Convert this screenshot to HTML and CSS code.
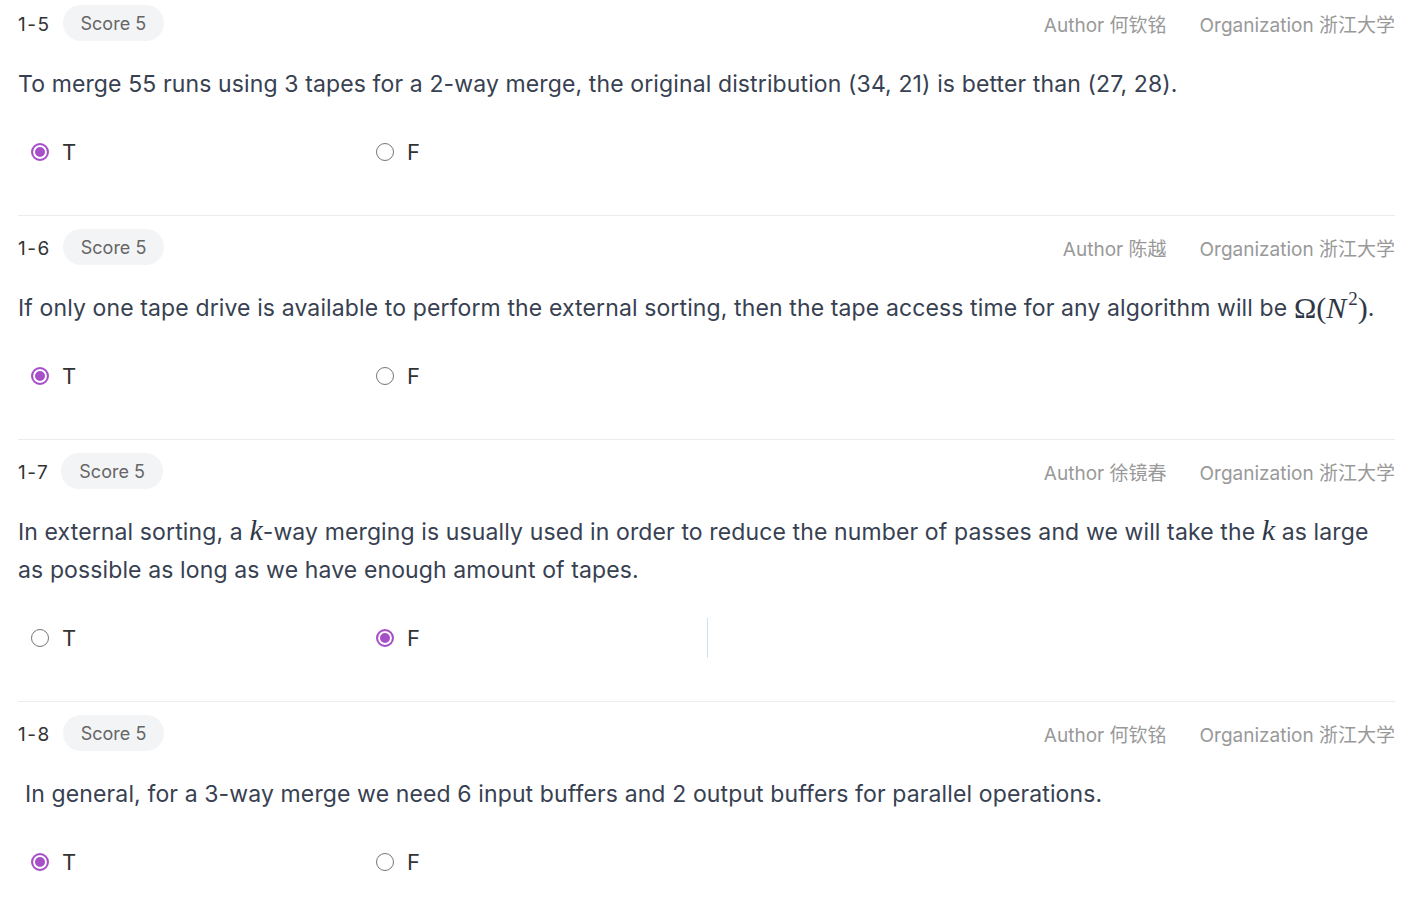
FILE: index.html
```html
<!DOCTYPE html>
<html>
<head>
<meta charset="utf-8">
<link rel="stylesheet" href="styles.css">
</head>
<body>
<div class="list">
  <section class="q">
    <div class="q-head">
      <div class="q-left"><span class="q-num">1-5</span><span class="pill">Score 5</span></div>
      <div class="q-meta"><span>Author 何钦铭</span><span>Organization 浙江大学</span></div>
    </div>
    <p class="q-text">To merge 55 runs using 3 tapes for a 2-way merge, the original distribution (34, 21) is better than (27, 28).</p>
    <div class="opts">
      <label class="opt"><span class="radio on"></span><span class="opt-l">T</span></label>
      <label class="opt"><span class="radio"></span><span class="opt-l">F</span></label>
    </div>
  </section>
  <section class="q">
    <div class="q-head">
      <div class="q-left"><span class="q-num">1-6</span><span class="pill">Score 5</span></div>
      <div class="q-meta"><span>Author 陈越</span><span>Organization 浙江大学</span></div>
    </div>
    <p class="q-text">If only one tape drive is available to perform the external sorting, then the tape access time for any algorithm will be <span class="math big"><span class="mr">Ω(</span><i>N</i><sup>2</sup><span class="mr">)</span></span>.</p>
    <div class="opts">
      <label class="opt"><span class="radio on"></span><span class="opt-l">T</span></label>
      <label class="opt"><span class="radio"></span><span class="opt-l">F</span></label>
    </div>
  </section>
  <section class="q">
    <div class="q-head">
      <div class="q-left"><span class="q-num">1-7</span><span class="pill">Score 5</span></div>
      <div class="q-meta"><span>Author 徐镜春</span><span>Organization 浙江大学</span></div>
    </div>
    <p class="q-text">In external sorting, a <i class="math">k</i>-way merging is usually used in order to reduce the number of passes and we will take the <i class="math">k</i> as large as possible as long as we have enough amount of tapes.</p>
    <div class="opts">
      <label class="opt"><span class="radio"></span><span class="opt-l">T</span></label>
      <label class="opt"><span class="radio on"></span><span class="opt-l">F</span></label>
      <span class="caret"></span>
    </div>
  </section>
  <section class="q">
    <div class="q-head">
      <div class="q-left"><span class="q-num">1-8</span><span class="pill">Score 5</span></div>
      <div class="q-meta"><span>Author 何钦铭</span><span>Organization 浙江大学</span></div>
    </div>
    <p class="q-text indent">In general, for a 3-way merge we need 6 input buffers and 2 output buffers for parallel operations.</p>
    <div class="opts">
      <label class="opt"><span class="radio on"></span><span class="opt-l">T</span></label>
      <label class="opt"><span class="radio"></span><span class="opt-l">F</span></label>
    </div>
  </section>
</div>
</body>
</html>
```
FILE: styles.css
```css
* { box-sizing: border-box; }
html, body { margin: 0; padding: 0; background: #fff; }
body {
  font-family: Inter, "Noto Sans CJK SC", sans-serif;
  color: #333;
}
.list { padding: 0 17px 0 18px; }
.q {
  padding-top: 5px;
  padding-bottom: 14px;
  border-bottom: 1px solid #ececec;
}
.q + .q { padding-top: 13px; }
.q:last-child { border-bottom: none; }
.q-head {
  display: flex;
  justify-content: space-between;
  align-items: center;
  height: 36px;
}
.q-left { display: flex; align-items: center; gap: 12px; }
.q-num { font-size: 19px; color: #333; letter-spacing: 1.5px; padding-top: 2px; }
.pill {
  height: 36px;
  line-height: 34px;
  padding: 2px 18px 0;
  border-radius: 18px;
  background: #f3f4f6;
  color: #666;
  font-size: 18px;
}
.q-meta {
  display: flex;
  gap: 33px;
  font-size: 19px;
  color: #999;
}
.q-text {
  margin: 24px 0 0;
  font-size: 23px;
  letter-spacing: 0.12px;
  line-height: 38px;
  color: #374151;
}
.q-text.indent { padding-left: 7px; }
.math {
  font-family: "Liberation Serif", "DejaVu Serif", serif;
  font-size: 30px;
  letter-spacing: 0;
  line-height: 1;
  color: #2f3747;
}
.math.big { display: inline-block; line-height: 38px; vertical-align: -2px; }
.math i, i.math { font-style: italic; }
.math .mr { font-style: normal; }
.math i { padding-right: 2px; }
.math sup { font-size: 19px; line-height: 0; vertical-align: 13px; font-style: normal; }
.opts {
  display: flex;
  align-items: center;
  height: 38px;
  margin-top: 30px;
  margin-bottom: 30px;
  padding-left: 13px;
}
.opt {
  display: flex;
  align-items: center;
  gap: 13px;
  width: 345px;
}
.opt-l { font-size: 22px; color: #333; }
.radio {
  width: 18px;
  height: 18px;
  border-radius: 50%;
  border: 1.5px solid #777;
  background: #fff;
  flex: none;
}
.radio.on {
  border: 2px solid #a650c8;
  box-shadow: inset 0 0 0 2px #fff, inset 0 0 0 8px #a650c8;
}
.caret {
  width: 1px;
  height: 40px;
  background: #cfe0f6;
  margin-left: -14px;
}
```
